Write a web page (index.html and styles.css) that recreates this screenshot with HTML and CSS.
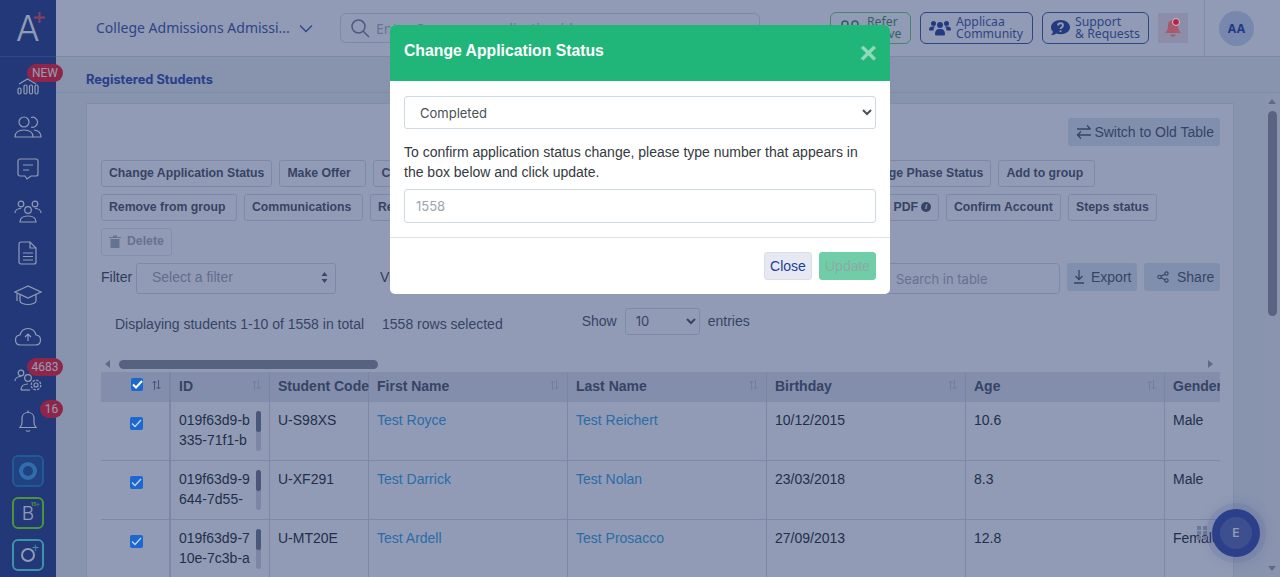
FILE: index.html
```html
<!DOCTYPE html>
<html lang="en">
<head>
  <meta charset="UTF-8" />
  <meta name="viewport" content="width=device-width, initial-scale=1.0"/>
  <title>Registered Students</title>
  <link rel="stylesheet" href="styles.css">
</head>
<body>
  <div class="app">
    <aside class="sidebar">
      <div class="logo">
        <span class="logo-a">A</span>
        <svg class="logo-plus" width="11" height="11" viewBox="0 0 11 11"><path d="M5.500 0v11M0 5.500h11"/></svg>
      </div>
      <nav class="nav">
        <a class="nav-item">
          <svg width="24" height="24" viewBox="0 0 24 24"><path d="M3 11l8.500-5 8.500 5"/><rect x="2" y="15" width="3" height="6" rx="1.500"/><rect x="8" y="12" width="3" height="9" rx="1.500"/><rect x="13.500" y="12" width="3" height="9" rx="1.500"/><rect x="19" y="12" width="3" height="9" rx="1.500"/></svg>
          <span class="badge badge-new">NEW</span>
        </a>
        <a class="nav-item">
          <svg width="28" height="24" viewBox="0 0 28 24"><circle cx="10" cy="7" r="5"/><path d="M1 22c0-5 4-7 9-7s9 2 9 7z"/><path d="M17 2.500a5 5 0 1 1 0 9.500"/><path d="M20 15c4 .5 7 2.500 7 7h-8"/></svg>
        </a>
        <a class="nav-item">
          <svg width="24" height="24" viewBox="0 0 24 24"><path d="M4 2h16a2 2 0 0 1 2 2v13a2 2 0 0 1-2 2h-5l-4 3-2-3H4a2 2 0 0 1-2-2V4a2 2 0 0 1 2-2z"/><path d="M7 8h10M7 13h6"/></svg>
        </a>
        <a class="nav-item">
          <svg width="28" height="24" viewBox="0 0 28 24"><circle cx="7" cy="5" r="2.800"/><circle cx="21" cy="5" r="2.800"/><circle cx="14" cy="11" r="3.300"/><path d="M1 14c0-3 3-4.500 6-4.500M27 14c0-3-3-4.500-6-4.500"/><path d="M6 23c0-4 3.500-6 8-6s8 2 8 6z"/></svg>
        </a>
        <a class="nav-item">
          <svg width="20" height="24" viewBox="0 0 20 24"><path d="M3 1h9l6 6v14a2 2 0 0 1-2 2H3a2 2 0 0 1-2-2V3a2 2 0 0 1 2-2z"/><path d="M12 1v6h6M5 12h10M5 15.500h10M5 19h10"/></svg>
        </a>
        <a class="nav-item">
          <svg width="28" height="24" viewBox="0 0 28 24"><path d="M14 3L1 9l13 6 13-6z"/><path d="M6 12v6c0 2 4 3.500 8 3.500s8-1.500 8-3.500v-6"/><path d="M3 10.500V18"/></svg>
        </a>
        <a class="nav-item">
          <svg width="28" height="24" viewBox="0 0 28 24"><path d="M8 20H6.500C3.500 20 1.500 18 1.500 15c0-2.800 2-4.800 4.500-5C7 6 10 3.500 14 3.500c4 0 7 2.500 8 6.500 2.800.2 4.500 2.300 4.500 5 0 3-2 5-5 5z"/><path d="M14 16V9M11 12l3-3 3 3"/></svg>
        </a>
        <a class="nav-item">
          <svg width="28" height="24" viewBox="0 0 28 24"><circle cx="7" cy="6" r="2.800"/><circle cx="14" cy="11" r="3.300"/><path d="M1 14c0-3 3-4.500 6-4.500M7 23c0-4 3-6 7-6"/><path d="M7 23h9"/><circle cx="22" cy="18" r="2"/><circle cx="22" cy="18" r="4.800" stroke-dasharray="2.500 1.200"/></svg>
          <span class="badge badge-count">4683</span>
        </a>
        <a class="nav-item">
          <svg width="20" height="24" viewBox="0 0 20 24"><path d="M2 18.500c1.500-1.500 2-3 2-5V9.500C4 6 6.500 3.500 10 3.500s6 2.500 6 6v4c0 2 .5 3.500 2 5z"/><path d="M10 1.500v2M8 21.500c.5 1 3.500 1 4 0"/></svg>
          <span class="badge badge-bell">16</span>
        </a>
      </nav>
      <div class="tiles">
        <div class="tile tile-blue"><span class="ring"></span></div>
        <div class="tile tile-green">B<sup>15+</sup></div>
        <div class="tile tile-teal"><span class="ring-o"></span><i>+</i></div>
      </div>
    </aside>

    <div class="main">
      <header class="topbar">
        <div class="college">College Admissions Admissi...
          <svg width="14" height="9" viewBox="0 0 14 9"><path d="M1 1.500l6 6 6-6"/></svg>
        </div>
        <div class="search">
          <svg width="20" height="20" viewBox="0 0 20 20"><circle cx="8.500" cy="8.500" r="6.500"/><path d="M13.500 13.500l5.500 5.500"/></svg>
          <span>Enter Company, application id</span>
        </div>
        <a class="top-btn top-btn-green">
          <svg width="22" height="16" viewBox="0 0 22 16"><circle cx="6" cy="4" r="3"/><circle cx="16" cy="4" r="3"/><path d="M1 15c0-4 2-6 5-6s5 2 5 6M11 15c0-4 2-6 5-6s5 2 5 6"/></svg>
          <span>Refer<br>Active</span>
        </a>
        <a class="top-btn top-btn-community">
          <svg class="solid" width="22" height="16" viewBox="0 0 22 16"><circle cx="4.500" cy="3.500" r="2.500"/><circle cx="17.500" cy="3.500" r="2.500"/><circle cx="11" cy="5" r="3"/><path d="M0 10c0-2 1-3.500 3-3.500h3c-.8 1-1.500 2.200-1.500 4H1a1 1 0 0 1-1-.5zM22 10c0-2-1-3.500-3-3.500h-3c.8 1 1.500 2.200 1.500 4H21a1 1 0 0 0 1-.5zM6 14c0-3 1.500-5 4-5h2c2.500 0 4 2 4 5 0 1-.5 1.500-1.500 1.500h-7C6.500 15.500 6 15 6 14z"/></svg>
          <span>Applicaa<br>Community</span>
        </a>
        <a class="top-btn top-btn-support">
          <svg class="solid" width="19" height="16" viewBox="0 0 19 16"><path d="M9.500 0C4.300 0 0 3.200 0 7.200c0 1.700.8 3.300 2 4.500-.3 1.400-1.200 2.700-1.900 3.500 2 0 3.900-.8 5-1.700 1.300.5 2.800.7 4.400.7 5.200 0 9.500-3.100 9.500-7C19 3.200 14.700 0 9.500 0z"/><path class="cut" d="M7 5.500c0-3 5-3 5 0 0 2-2.500 1.800-2.500 3.500"/><circle class="cut-dot" cx="9.500" cy="11.200" r="1"/></svg>
          <span>Support<br>&amp; Requests</span>
        </a>
        <div class="bell-box">
          <svg width="16" height="20" viewBox="0 0 16 20"><path d="M8 2c-3 0-5 2.300-5 5.500 0 4-1 5.500-3 7.500h16c-2-2-3-3.500-3-7.500C13 4.300 11 2 8 2zM5.500 16.500c0 3 5 3 5 0z"/></svg>
          <i class="bell-dot"></i>
        </div>
        <div class="user-box"><div class="avatar">AA</div></div>
      </header>

      <div class="crumbs">Registered Students</div>

      <div class="page-row">
        <div class="content">
          <section class="card">
            <div class="switch-row">
              <a class="soft-btn switch-btn">
                <svg width="16" height="16" viewBox="0 0 16 16"><path d="M1 5h13.500M11 1.500L14.500 5M15 11H1.500M5 7.500L1.500 11 5 14.500"/></svg>
                Switch to Old Table
              </a>
            </div>

            <div class="action-row">
              <a class="action">Change Application Status</a>
              <a class="action w-87">Make Offer</a>
              <a class="action w-467">Change Course</a>
              <a class="action w-144">Change Phase Status</a>
              <a class="action w-97">Add to group</a>
            </div>
            <div class="action-row">
              <a class="action w-136">Remove from group</a>
              <a class="action w-119">Communications</a>
              <a class="action w-280">Reset Password</a>
              <a class="action w-282">Download PDF <i class="info">i</i></a>
              <a class="action w-115">Confirm Account</a>
              <a class="action w-89">Steps status</a>
            </div>
            <div class="action-row">
              <a class="action action-off">
                <svg width="12" height="13" viewBox="0 0 12 13"><path d="M0 2h12v1H0zM4 .500h4V2H4zM1.500 4h9v9h-9z"/></svg>
                Delete
              </a>
            </div>

            <div class="filter-row">
              <label class="filter-label">Filter</label>
              <div class="fake-select">Select a filter
                <svg width="7" height="11" viewBox="0 0 7 11"><path d="M3.500 0l3 4h-6zM3.500 11l-3-4h6z"/></svg>
              </div>
              <label class="view-label">View</label>
              <div class="filter-right">
                <input class="table-search" placeholder="Search in table">
                <a class="soft-btn export">
                  <svg width="12" height="14" viewBox="0 0 12 14"><path d="M6 0v9M2.500 6L6 9.500 9.500 6M1 13h10"/></svg>
                  Export
                </a>
                <a class="soft-btn share">
                  <svg width="12" height="12" viewBox="0 0 14 14"><circle cx="3" cy="7" r="2"/><circle cx="11" cy="3" r="2"/><circle cx="11" cy="11" r="2"/><path d="M4.800 6l4.400-2.200M4.800 8l4.400 2.200"/></svg>
                  Share
                </a>
              </div>
            </div>

            <div class="info-row">
              <span class="info-total">Displaying students 1-10 of 1558 in total</span>
              <span class="info-selected">1558 rows selected</span>
              <span class="show">Show
                <select class="show-select"><option>10</option></select>
                entries
              </span>
            </div>

            <div class="hscroll">
              <i class="arrow-left"></i>
              <div class="hscroll-track"><div class="hscroll-thumb"></div></div>
              <i class="arrow-right"></i>
            </div>

            <div class="table-wrap">
              <table class="students">
                <colgroup>
                  <col class="c-check"><col class="c-id"><col class="c-code">
                  <col class="c-wide"><col class="c-wide"><col class="c-wide"><col class="c-wide"><col class="c-wide">
                </colgroup>
                <thead>
                  <tr>
                    <th class="check-cell"><div class="th-in th-check"><span class="box box-head"><svg width="11" height="9" viewBox="0 0 11 9"><path d="M1 4.500l3 3 6-6.500"/></svg></span><svg class="sort sort-dark" width="9" height="10" viewBox="0 0 9 10"><path d="M2.500 10V1M.5 3l2-2 2 2M6.500 0v9M4.500 7l2 2 2-2"/></svg></div></th>
                    <th><div class="th-in">ID<svg class="sort" width="9" height="10" viewBox="0 0 9 10"><path d="M2.500 10V1M.5 3l2-2 2 2M6.500 0v9M4.500 7l2 2 2-2"/></svg></div></th>
                    <th><div class="th-in">Student Code</div></th>
                    <th><div class="th-in">First Name<svg class="sort" width="9" height="10" viewBox="0 0 9 10"><path d="M2.500 10V1M.5 3l2-2 2 2M6.500 0v9M4.500 7l2 2 2-2"/></svg></div></th>
                    <th><div class="th-in">Last Name<svg class="sort" width="9" height="10" viewBox="0 0 9 10"><path d="M2.500 10V1M.5 3l2-2 2 2M6.500 0v9M4.500 7l2 2 2-2"/></svg></div></th>
                    <th><div class="th-in">Birthday<svg class="sort" width="9" height="10" viewBox="0 0 9 10"><path d="M2.500 10V1M.5 3l2-2 2 2M6.500 0v9M4.500 7l2 2 2-2"/></svg></div></th>
                    <th><div class="th-in">Age<svg class="sort" width="9" height="10" viewBox="0 0 9 10"><path d="M2.500 10V1M.5 3l2-2 2 2M6.500 0v9M4.500 7l2 2 2-2"/></svg></div></th>
                    <th><div class="th-in">Gender</div></th>
                  </tr>
                </thead>
                <tbody>
                  <tr>
                    <td class="check-cell"><span class="box"><svg width="11" height="9" viewBox="0 0 11 9"><path d="M1 4.500l3 3 6-6.500"/></svg></span></td>
                    <td><div class="id-cell"><span>019f63d9-b<br>335-71f1-b</span><i class="mini-bar"><b></b></i></div></td>
                    <td>U-S98XS</td>
                    <td><a class="link">Test Royce</a></td>
                    <td><a class="link">Test Reichert</a></td>
                    <td>10/12/2015</td>
                    <td>10.6</td>
                    <td>Male</td>
                  </tr>
                  <tr>
                    <td class="check-cell"><span class="box"><svg width="11" height="9" viewBox="0 0 11 9"><path d="M1 4.500l3 3 6-6.500"/></svg></span></td>
                    <td><div class="id-cell"><span>019f63d9-9<br>644-7d55-</span><i class="mini-bar"><b></b></i></div></td>
                    <td>U-XF291</td>
                    <td><a class="link">Test Darrick</a></td>
                    <td><a class="link">Test Nolan</a></td>
                    <td>23/03/2018</td>
                    <td>8.3</td>
                    <td>Male</td>
                  </tr>
                  <tr>
                    <td class="check-cell"><span class="box"><svg width="11" height="9" viewBox="0 0 11 9"><path d="M1 4.500l3 3 6-6.500"/></svg></span></td>
                    <td><div class="id-cell"><span>019f63d9-7<br>10e-7c3b-a</span><i class="mini-bar"><b></b></i></div></td>
                    <td>U-MT20E</td>
                    <td><a class="link">Test Ardell</a></td>
                    <td><a class="link">Test Prosacco</a></td>
                    <td>27/09/2013</td>
                    <td>12.8</td>
                    <td>Female</td>
                  </tr>
                </tbody>
              </table>
            </div>
          </section>
        </div>
        <div class="page-scroll">
          <i class="up"></i>
          <div class="page-thumb"></div>
          <i class="down"></i>
        </div>
      </div>
    </div>
  </div>

  <div class="grip"><i></i><i></i><i></i><i></i><i></i><i></i></div>
  <div class="fab"><span>E</span></div>

  <div class="backdrop"></div>

  <div class="modal">
    <div class="modal-head">
      <h2>Change Application Status</h2>
      <span class="modal-x">×</span>
    </div>
    <div class="modal-body">
      <select class="modal-select"><option>Completed</option></select>
      <p>To confirm application status change, please type number that appears in the box below and click update.</p>
      <input class="modal-input" placeholder="1558">
    </div>
    <div class="modal-foot">
      <button class="btn-close">Close</button>
      <button class="btn-update">Update</button>
    </div>
  </div>
</body>
</html>
```

FILE: styles.css
```css
* {
  box-sizing: border-box;
}

html, body {
  margin: 0;
  padding: 0;
  height: 100%;
  overflow: hidden;
}

body {
  position: relative;
  font-family: 'Liberation Sans', Arial, sans-serif;
  font-size: 14px;
  color: #212529;
  background: #eceef1;
}

svg {
  display: block;
  flex: none;
}

.app {
  display: flex;
  height: 577px;
}

/* sidebar */
.sidebar {
  width: 56px;
  flex: none;
  background: #223884;
  display: flex;
  flex-direction: column;
}

.logo {
  height: 57px;
  position: relative;
  border-bottom: 1px solid #42579c;
  color: #fff;
}

.logo-a {
  display: block;
  padding: 8px 0 0 16px;
  font-family: 'Inter', sans-serif;
  font-weight: 300;
  font-size: 35px;
  line-height: 40px;
}

.logo-plus {
  position: absolute;
  left: 34px;
  top: 12px;
  fill: none;
  stroke: #f0484e;
  stroke-width: 2;
}

.nav {
  padding-top: 7px;
  display: flex;
  flex-direction: column;
}

.nav-item {
  height: 42px;
  position: relative;
  display: flex;
  align-items: center;
  justify-content: center;
}

.nav-item svg {
  fill: none;
  stroke: #fff;
  stroke-width: 1.2;
}

.badge {
  position: absolute;
  top: 0;
  height: 18px;
  line-height: 18px;
  border-radius: 9px;
  background: #fb1426;
  color: #fff;
  font-family: 'Roboto', sans-serif;
  font-size: 12px;
  text-align: center;
}

.badge-new,
.badge-count {
  left: 27px;
  width: 36px;
}

.badge-bell {
  left: 40px;
  width: 23px;
}

.tiles {
  margin-top: 13px;
  padding-left: 12px;
  display: flex;
  flex-direction: column;
  gap: 10px;
}

.tile {
  width: 32px;
  height: 32px;
  border-radius: 6px;
  border: 2px solid;
  position: relative;
  display: flex;
  align-items: center;
  justify-content: center;
  color: #fff;
}

.tile-blue {
  border-color: #1f7cc0;
  background: #1d4c96;
}

.ring {
  width: 18px;
  height: 18px;
  border-radius: 50%;
  border: 4px solid #3aa5ea;
}

.tile-green {
  border-color: #70f00c;
  font-family: 'Inter', sans-serif;
  font-size: 19px;
  font-weight: 300;
}

.tile-green sup {
  position: absolute;
  left: 17px;
  top: 2px;
  font-size: 5px;
  font-weight: 700;
  color: #70f00c;
}

.tile-teal {
  border-color: #5aeee0;
}

.ring-o {
  width: 14px;
  height: 14px;
  border-radius: 50%;
  border: 2px solid #fff;
}

.tile-teal i {
  position: absolute;
  left: 18px;
  top: 1px;
  font-size: 12px;
  line-height: 12px;
  font-style: normal;
  color: #5aeee0;
}

/* top bar */
.main {
  flex: 1;
  min-width: 0;
  display: flex;
  flex-direction: column;
}

.topbar {
  height: 57px;
  flex: none;
  background: #fff;
  border-bottom: 1px solid #d3d9e6;
  display: flex;
  align-items: center;
  font-family: 'Noto Sans', sans-serif;
}

.college {
  width: 284px;
  flex: none;
  padding: 0 0 2px 40px;
  display: flex;
  align-items: center;
  gap: 9px;
  font-size: 14px;
  color: #38509e;
  white-space: nowrap;
}

.college svg {
  fill: none;
  stroke: #38509e;
  stroke-width: 1.3;
  margin-top: 2px;
}

.search {
  width: 420px;
  height: 30px;
  flex: none;
  border: 1px solid #d5dae6;
  border-radius: 6px;
  padding-left: 9px;
  display: flex;
  align-items: center;
  gap: 6px;
  font-size: 14px;
  color: #aab1c2;
  overflow: hidden;
}

.search svg {
  fill: none;
  stroke: #727c94;
  stroke-width: 1.5;
}

.top-btn {
  height: 32px;
  flex: none;
  margin-left: 9px;
  padding: 0 0 0 8px;
  border: 1px solid #38509e;
  border-radius: 6px;
  display: flex;
  align-items: center;
  gap: 6px;
  font-size: 12.250px;
  line-height: 12px;
  color: #38509e;
  white-space: nowrap;
}

.top-btn svg {
  fill: none;
  stroke: #38509e;
  stroke-width: 1.500;
}

.top-btn svg.solid {
  fill: #223c96;
  stroke: none;
}

.top-btn svg .cut {
  fill: none;
  stroke: #fff;
  stroke-width: 1.800;
}

.top-btn svg .cut-dot {
  fill: #fff;
}

.top-btn-green {
  width: 81px;
  margin-left: 70px;
  border-color: #6ccf6a;
  color: #3f8f50;
}

.top-btn-green svg {
  stroke: #2f8a46;
}

.top-btn-community {
  width: 113px;
  gap: 5px;
}

.top-btn-support {
  width: 107px;
  gap: 5px;
}

.bell-box {
  width: 30px;
  height: 30px;
  flex: none;
  margin-left: 9px;
  position: relative;
  background: #f5e3e7;
  display: flex;
  align-items: center;
  justify-content: center;
}

.bell-box svg {
  fill: #a85a6c;
  position: relative;
  z-index: 5;
}

.bell-dot {
  position: absolute;
  top: 5px;
  right: 8px;
  width: 8px;
  height: 8px;
  border-radius: 50%;
  border: 1px solid #c3c8d8;
  background: #bc1f42;
  z-index: 5;
}

.user-box {
  width: 76px;
  height: 56px;
  flex: none;
  margin-left: 16px;
  border-left: 1px solid #d8dde8;
  padding-left: 14px;
  display: flex;
  align-items: center;
}

.avatar {
  width: 35px;
  height: 35px;
  border-radius: 50%;
  background: #cbd6f0;
  color: #223c96;
  font-family: 'Inter', sans-serif;
  font-weight: 700;
  font-size: 12px;
  line-height: 35px;
  text-align: center;
}

.crumbs {
  height: 36px;
  flex: none;
  padding: 15px 0 0 30px;
  border-bottom: 1px solid #dadee8;
  font-family: 'Inter', sans-serif;
  font-weight: 700;
  font-size: 12.800px;
  line-height: 16px;
  color: #2a46a8;
}

.page-row {
  flex: 1;
  min-height: 0;
  display: flex;
}

.content {
  flex: 1;
  min-width: 0;
  padding: 10px 31px 0 30px;
  overflow: hidden;
}

.page-scroll {
  width: 15px;
  flex: none;
  background: #f0f1f3;
  position: relative;
}

.page-scroll .up,
.page-scroll .down {
  position: absolute;
  left: 3px;
  border-left: 4.500px solid transparent;
  border-right: 4.500px solid transparent;
}

.page-scroll .up {
  top: 6px;
  border-bottom: 5px solid #9a9ca8;
}

.page-scroll .down {
  bottom: 6px;
  border-top: 5px solid #9a9ca8;
}

.page-thumb {
  position: absolute;
  left: 3px;
  top: 18px;
  width: 9px;
  height: 205px;
  border-radius: 5px;
  background: #8e8e98;
}

/* card */
.card {
  background: #fff;
  border: 1px solid #dde1ea;
  padding: 14px 13px 0 14px;
}

.switch-row {
  display: flex;
  justify-content: flex-end;
}

.soft-btn {
  height: 28px;
  padding: 0 6px;
  border-radius: 3px;
  background: #dfe6f0;
  color: #4a4f5c;
  font-size: 14px;
  display: flex;
  align-items: center;
  gap: 2px;
}

.soft-btn svg {
  fill: none;
  stroke: #4a4f5c;
  stroke-width: 1.300;
}

.switch-btn {
  padding-left: 8px;
}

.action-row {
  display: flex;
  gap: 7px;
  margin-top: 7px;
}

.switch-row + .action-row {
  margin-top: 14px;
}

.action {
  height: 27px;
  flex: none;
  padding: 0 7px 1px;
  border: 1px solid #d6dbe6;
  border-radius: 3px;
  display: flex;
  align-items: center;
  font-size: 12.250px;
  font-weight: 700;
  color: #4a4f5c;
  white-space: nowrap;
}

.w-87 { width: 87px; }
.w-89 { width: 89px; }
.w-97 { width: 97px; }
.w-115 { width: 115px; }
.w-119 { width: 119px; }
.w-136 { width: 136px; }
.w-144 { width: 144px; justify-content: flex-end; }
.w-280 { width: 280px; }
.w-282 { width: 282px; justify-content: flex-end; }
.w-467 { width: 467px; }

.info {
  width: 10px;
  height: 10px;
  margin-left: 3px;
  border-radius: 50%;
  background: #4a4f5c;
  color: #fff;
  font-size: 8px;
  line-height: 10px;
  text-align: center;
}

.action-off {
  height: 28px;
  width: 71px;
  padding-bottom: 2px;
  gap: 6px;
  color: #a8acb6;
  border-color: #e3e6ec;
}

.action-off svg {
  fill: #a8acb6;
}

.filter-row {
  margin-top: 7px;
  height: 31px;
  display: flex;
  align-items: flex-start;
}

.filter-label {
  width: 35px;
  line-height: 29px;
  color: #3a3f4c;
}

.fake-select {
  width: 200px;
  height: 31px;
  border: 1px solid #d6dbe6;
  border-radius: 3px;
  padding: 0 7px 3px 15px;
  display: flex;
  align-items: center;
  justify-content: space-between;
  color: #a0a4ae;
}

.fake-select svg {
  fill: #50556a;
}

.view-label {
  margin-left: 44px;
  line-height: 29px;
  color: #3a3f4c;
}

.filter-right {
  margin-left: auto;
  display: flex;
  gap: 7px;
}

.table-search {
  width: 240px;
  height: 31px;
  border: 1px solid #d6dbe6;
  border-radius: 4px;
  padding: 0 12px 0 75px;
  background: #fff;
  font-family: 'Inter', sans-serif;
  font-size: 13px;
}

.table-search::placeholder {
  color: #a8adb8;
}

.filter-right .soft-btn.export {
  width: 70px;
  gap: 6px;
}

.filter-right .soft-btn.share {
  width: 76px;
  padding: 0 0 0 13px;
  gap: 8px;
}

.info-row {
  margin-top: 10px;
  height: 34px;
  display: flex;
  align-items: center;
  color: #4a4f5c;
}

.info-total {
  margin-left: 14px;
  padding-top: 5px;
}

.info-selected {
  margin-left: 18px;
  padding-top: 5px;
}

.show {
  margin-left: 79px;
  display: flex;
  align-items: center;
  gap: 8px;
}

.show-select {
  width: 75px;
  height: 27px;
  padding-left: 6px;
  border: 1px solid #d6dbe6;
  border-radius: 3px;
  background: #fff;
  color: #4a4f5c;
  font-family: 'Inter', sans-serif;
  font-size: 13px;
}

.hscroll {
  margin-top: 18px;
  height: 16px;
  position: relative;
  display: flex;
  align-items: center;
}

.hscroll-track {
  flex: 1;
  padding: 0 9px 0 18px;
}

.hscroll-thumb {
  width: 259px;
  height: 9px;
  border-radius: 5px;
  background: #8a8c94;
}

.arrow-left,
.arrow-right {
  position: absolute;
  top: 4px;
  border-top: 4.500px solid transparent;
  border-bottom: 4.500px solid transparent;
}

.arrow-left {
  left: 4px;
  border-right: 5px solid #9a9ca8;
}

.arrow-right {
  right: 7px;
  border-left: 5px solid #9a9ca8;
}

.table-wrap {
  overflow: hidden;
}

.students {
  table-layout: fixed;
  width: 1263px;
  border-collapse: separate;
  border-spacing: 0;
}

.c-check {
  width: 70px;
}

.c-id,
.c-code {
  width: 99px;
}

.c-wide {
  width: 199px;
}

.students th {
  height: 30px;
  padding: 0 8px;
  background: #e0e4ec;
  border-right: 1px solid #cfd5e2;
  text-align: left;
  font-size: 14px;
  font-weight: 700;
  color: #4a4f5c;
  white-space: nowrap;
}

.th-in {
  display: flex;
  align-items: center;
  justify-content: space-between;
  padding-bottom: 2px;
}

.th-check {
  padding-left: 22px;
  gap: 9px;
  justify-content: flex-start;
}

.sort {
  fill: none;
  stroke: #bfc4d0;
  stroke-width: 1;
  margin-bottom: 2px;
}

.sort-dark {
  stroke: #6b7186;
}

.students td {
  height: 59px;
  padding: 8px;
  line-height: 20px;
  vertical-align: top;
  border-right: 1px solid #d3d8e4;
  border-bottom: 1px solid #d3d8e4;
  white-space: nowrap;
}

.students th.check-cell,
.students td.check-cell {
  border-right-width: 2px;
}

.students td.check-cell {
  padding: 15px 0 0 29px;
}

.box {
  width: 13px;
  height: 13px;
  border-radius: 2px;
  background: #1a68d0;
  display: flex;
  align-items: center;
  justify-content: center;
  position: relative;
  z-index: 5;
}

.box svg {
  fill: none;
  stroke: #c3d4ee;
  stroke-width: 1.300;
}

.box-head {
  margin-bottom: 4px;
}

.box-head svg {
  stroke: #fff;
  stroke-width: 2;
}

.id-cell {
  display: flex;
  justify-content: space-between;
}

.mini-bar {
  width: 5px;
  height: 40px;
  margin-top: 1px;
  border-radius: 3px;
  background: #d6d6de;
  display: block;
}

.mini-bar b {
  display: block;
  width: 5px;
  height: 21px;
  border-radius: 3px;
  background: #72748a;
}

.link {
  color: #30a0e4;
}

/* floating button */
.grip {
  position: absolute;
  left: 1197px;
  top: 526px;
  width: 11px;
  display: grid;
  grid-template-columns: 4px 4px;
  gap: 1px 2px;
}

.grip i {
  height: 4px;
  background: #b5bcc9;
}

.fab {
  position: absolute;
  left: 1212px;
  top: 509px;
  width: 48px;
  height: 48px;
  border-radius: 50%;
  background: #3246a8;
  box-shadow: 0 0 0 6px rgba(50, 70, 168, 0.08), 0 0 14px 6px rgba(50, 70, 168, 0.12);
  display: flex;
  align-items: center;
  justify-content: center;
}

.fab span {
  width: 32px;
  height: 32px;
  border-radius: 50%;
  background: #5666b0;
  color: #fff;
  font-family: 'Inter', sans-serif;
  font-size: 12px;
  font-weight: 600;
  line-height: 32px;
  text-align: center;
}

/* modal */
.backdrop {
  position: absolute;
  inset: 0;
  z-index: 3;
  background: rgba(36, 56, 108, 0.5);
}

.modal {
  position: absolute;
  left: 390px;
  top: 25px;
  z-index: 10;
  width: 500px;
  height: 269px;
  background: #fff;
  border-radius: 5px;
  overflow: hidden;
}

.modal-head {
  height: 56px;
  padding: 0 13px 0 14px;
  background: #20b679;
  display: flex;
  justify-content: space-between;
}

.modal-head h2 {
  margin: 0;
  padding-top: 17px;
  color: #fff;
  font-size: 15.750px;
  font-weight: 700;
  line-height: 18px;
}

.modal-x {
  color: #fff;
  opacity: 0.5;
  font-size: 30px;
  font-weight: 700;
  line-height: 56px;
}

.modal-body {
  height: 157px;
  padding: 15px 14px 0;
  border-bottom: 1px solid #dee2e6;
}

.modal-select {
  display: block;
  width: 472px;
  height: 33px;
  padding-left: 11px;
  border: 1px solid #ced9e2;
  border-radius: 3px;
  background: #fff;
  color: #495057;
  font-family: 'Inter', sans-serif;
  font-size: 13px;
}

.modal-body p {
  margin: 13px 0 7px;
  color: #343a40;
  font-size: 14px;
  line-height: 20px;
}

.modal-input {
  display: block;
  width: 472px;
  height: 34px;
  padding: 0 11px;
  border: 1px solid #ced9e2;
  border-radius: 3px;
  font-family: 'Inter', sans-serif;
  font-size: 13px;
}

.modal-input::placeholder {
  color: #9aa5ad;
}

.modal-foot {
  padding: 14px 14px 0;
  display: flex;
  justify-content: flex-end;
  gap: 7px;
}

.modal-foot button {
  height: 28px;
  padding: 0 5px;
  border-radius: 3px;
  font-family: 'Liberation Sans', Arial, sans-serif;
  font-size: 14px;
}

.btn-close {
  width: 48px;
  border: 1px solid #d8dde8;
  background: #e6e9f2;
  color: #223c96;
}

.btn-update {
  width: 57px;
  border: 1px solid #6fcea7;
  background: #6fcea7;
  color: #8fa8a8;
}
```
